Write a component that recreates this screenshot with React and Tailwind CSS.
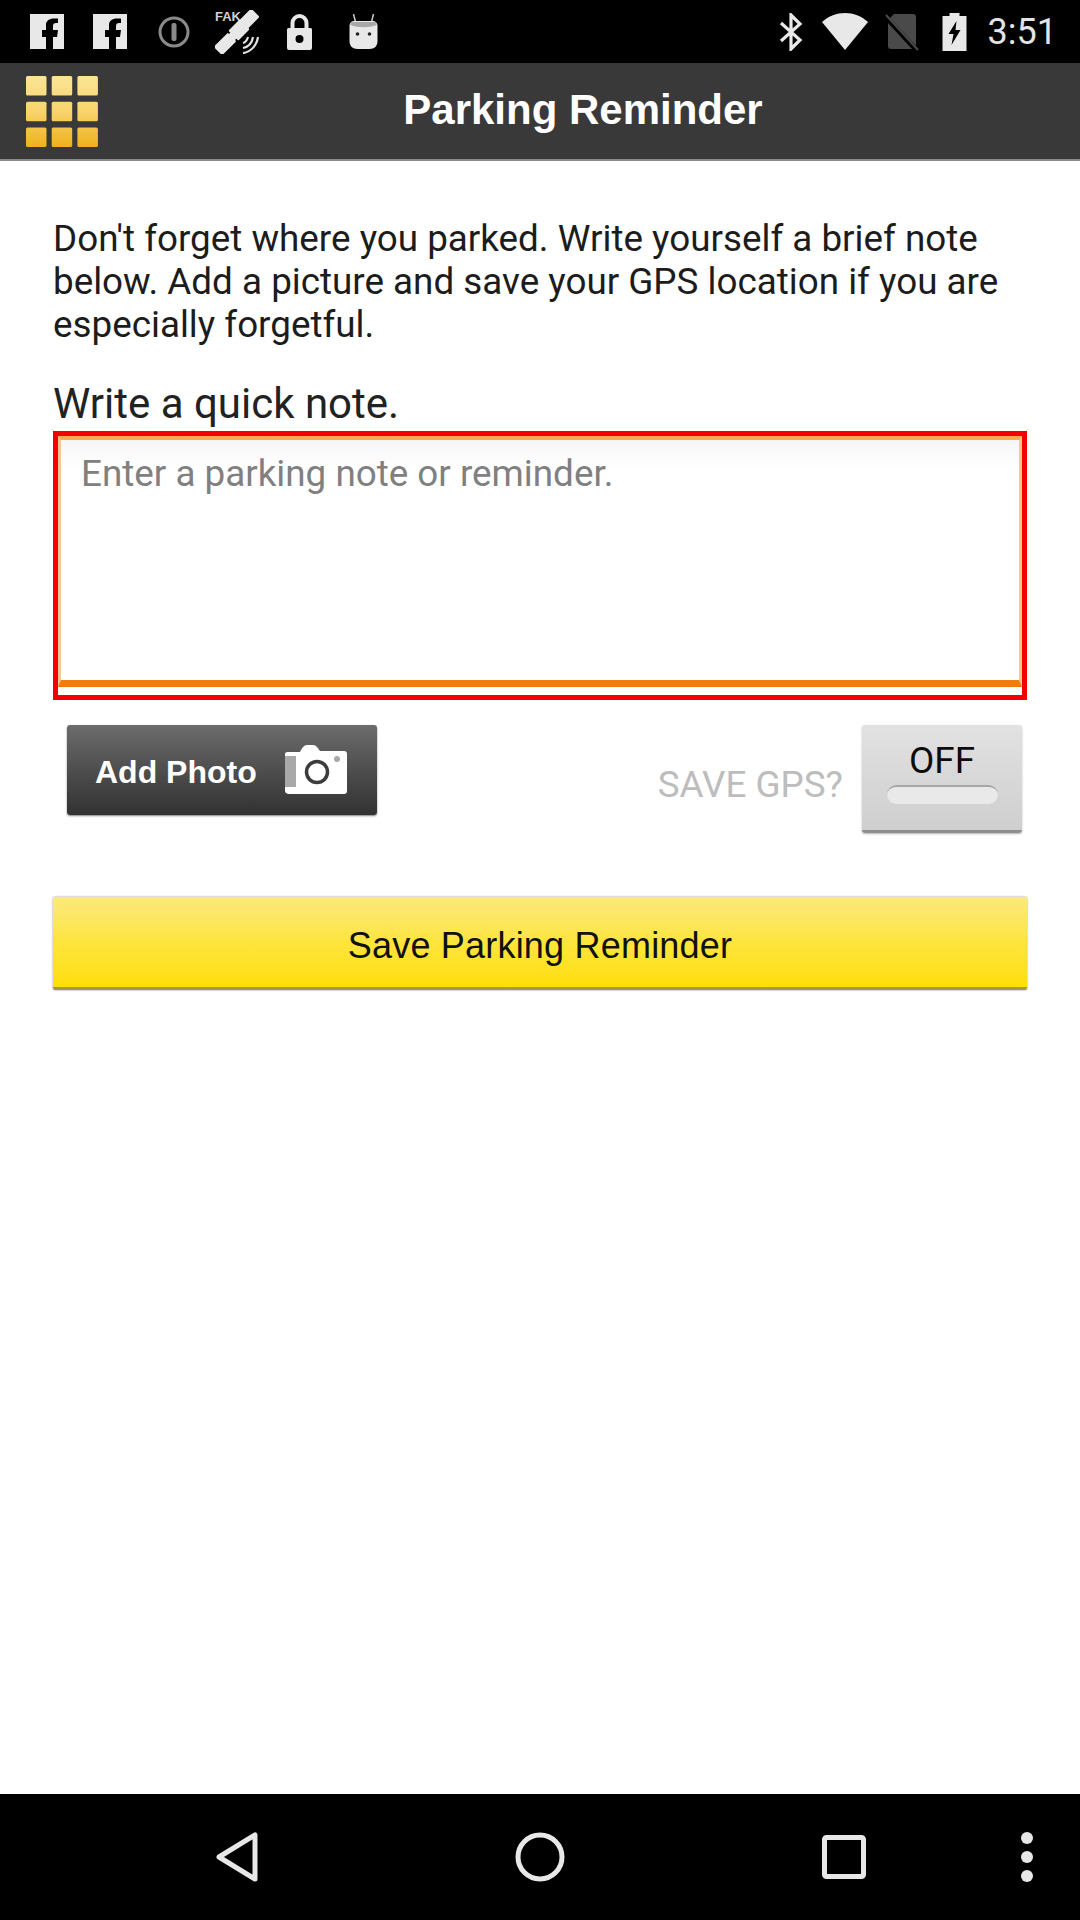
const roboto = "font-['Roboto',sans-serif]"
const arial = "font-['Liberation_Sans',Arial,sans-serif]"

function FbIcon() {
  return (
    <svg width="34" height="35" viewBox="0 0 34 35">
      <path fill="#e8e8e8" d="M0 0H34V35H23V23H27L28 16H23V12C23 10 24 9 26 9H28V4.500C26 4.500 25 4.500 24 4.500C19 4.500 16 7 16 11V16H12V23H16V35H0Z" />
    </svg>
  )
}

function StatusBar() {
  return (
    <div className="flex h-[63px] items-center bg-black pl-[30px] pr-[23px]">
      <FbIcon />
      <div className="ml-[29px]"><FbIcon /></div>
      <svg className="ml-[31px]" width="32" height="32" viewBox="0 0 32 32">
        <circle cx="16" cy="16" r="14" fill="none" stroke="#8a8a8a" strokeWidth="3" />
        <rect x="13.500" y="7" width="5" height="18" rx="2" fill="#8a8a8a" />
      </svg>
      <svg className="ml-[25px]" width="44" height="44" viewBox="0 0 44 44">
        <text x="0" y="11" fontSize="13" fontWeight="700" fill="#d0d0d0" fontFamily="Liberation Sans, sans-serif">FAK</text>
        <g fill="#e8e8e8">
          <rect x="-6" y="-9" width="12" height="18" transform="translate(34 9) rotate(45)" rx="1" />
          <rect x="-7" y="-8" width="14" height="16" transform="translate(24 20) rotate(45)" rx="1" />
          <rect x="-6" y="-10" width="12" height="20" transform="translate(10 34) rotate(45)" rx="1" />
          <path d="M15 23L21 29" stroke="#e8e8e8" strokeWidth="4" />
        </g>
        <path fill="none" stroke="#e0e0e0" strokeWidth="2.200" d="M28 43C36 42 42 35 43 27M28 38C33 37 37 33 38 27M28 33C30 32.500 32 30.500 33 27" />
      </svg>
      <svg className="ml-[27px]" width="27" height="36" viewBox="0 0 26 36">
        <path fill="none" stroke="#e8e8e8" strokeWidth="4" d="M6 16V9a7 7 0 0 1 14 0v7" />
        <path fill="#e8e8e8" fillRule="evenodd" d="M2 14H24a1.500 1.500 0 0 1 1.500 1.500V34a2 2 0 0 1-2 2H2.500a2 2 0 0 1-2-2V15.500A1.500 1.500 0 0 1 2 14ZM13 21a4 4 0 1 0 0 8 4 4 0 0 0 0-8Z" />
      </svg>
      <svg className="ml-[35px]" width="31" height="36" viewBox="0 0 30 36">
        <path stroke="#c8c8c8" strokeWidth="1.500" d="M7 8L5 0M23 8L25 0" />
        <path fill="#e8e8e8" d="M6 7H24C27 7 29 9 29 12V27C29 32 26 35 21 35H9C4 35 1 32 1 27V12C1 9 3 7 6 7Z" />
        <path fill="#a8a8a8" d="M4 8H26C27 8 28 9 28 11C20 14 10 14 2 11C2 9 3 8 4 8Z" />
        <circle cx="9" cy="20" r="1.800" fill="#222" />
        <circle cx="21" cy="20" r="1.800" fill="#222" />
      </svg>
      <div className="flex-1" />
      <svg width="24" height="38" viewBox="0 0 24 38">
        <path fill="none" stroke="#e8e8e8" strokeWidth="3.200" d="M2 10L21 27L12 36V2L21 11L2 28" />
      </svg>
      <svg className="ml-[19px]" width="46" height="37" viewBox="0 0 46 37">
        <path fill="#e8e8e8" d="M23 37L0 9C13-3 33-3 46 9Z" />
      </svg>
      <svg className="ml-[17px]" width="34" height="38" viewBox="0 0 34 38">
        <path fill="#4a4a4a" d="M9 1H28a3 3 0 0 1 3 3V33L5 5Z M3 10L27 36H6a3 3 0 0 1-3-3Z" />
        <path stroke="#4a4a4a" strokeWidth="2" d="M1 2L33 37" />
      </svg>
      <svg className="ml-[23px]" width="25" height="38" viewBox="0 0 24 38">
        <path fill="#e8e8e8" fillRule="evenodd" d="M7 0H17V3H24V38H0V3H7ZM14 8L6 21H11L9 32L18 17H13Z" />
      </svg>
      <span className={`ml-[21px] text-[36px] leading-none text-[#e4e4e4] ${roboto}`}>3:51</span>
    </div>
  )
}

function GridIcon() {
  const spots = [0, 25.700, 51.400]
  return (
    <svg width="72" height="71" viewBox="0 0 72 71">
      <defs>
        <linearGradient id="tiles" x1="0" x2="0" y1="0" y2="1">
          <stop offset="0%" stopColor="#fbe596" />
          <stop offset="50%" stopColor="#f8d46c" />
          <stop offset="100%" stopColor="#efb11c" />
        </linearGradient>
        <mask id="tilemask">
          {spots.map((y) => spots.map((x) => (
            <rect key={`${x}-${y}`} x={x} y={y} width="20.500" height="19.600" rx="1.500" fill="#fff" />
          )))}
        </mask>
      </defs>
      <rect width="72" height="71" fill="url(#tiles)" mask="url(#tilemask)" />
    </svg>
  )
}

function Camera() {
  return (
    <svg width="64" height="52" viewBox="0 0 64 52">
      <path fill="#fff" d="M3 8H16C18 4 20 1 23 1H29C32 1 34 4 36 7H60C62 7 63 8 63 10V47C63 49 62 50 60 50H5C3 50 1 49 1 47V10C1 9 2 8 3 8Z" />
      <rect x="1" y="12" width="11" height="31" fill="#a9a9a9" />
      <circle cx="33" cy="28" r="10.500" fill="none" stroke="#3c3c3c" strokeWidth="3.500" />
      <circle cx="53" cy="15" r="3" fill="#a9a9a9" />
    </svg>
  )
}

export default function App() {
  return (
    <div className="flex h-[1920px] w-[1080px] flex-col overflow-hidden bg-white">
      <StatusBar />

      <header className="flex h-[98px] items-center border-b-2 border-[#8c8c8c] bg-[#393939]">
        <div className="w-[86px] shrink-0 pl-[26px] pt-[1px]"><GridIcon /></div>
        <h1 className={`flex-1 pb-[4px] text-center text-[42px] font-bold text-white ${arial}`}>Parking Reminder</h1>
      </header>

      <main className={`flex-1 px-[53px] pt-[56px] ${roboto}`}>
        <p className="text-[36.800px] leading-[43px] text-[#1c1c1c]">
          Don't forget where you parked. Write yourself a brief note below. Add a picture and save your GPS location if you are especially forgetful.
        </p>
        <p className="mt-[36px] text-[42px] leading-[44px] text-[#222]">Write a quick note.</p>

        <div className="mt-[5px] h-[269px] border-[5px] border-[#f40000] pb-[8px]">
          <div className="h-full border-x-[3px] border-t-[4px] border-b-[7px] border-x-[#f9c78d] border-t-[#f9a94e] border-b-[#f57c0c] bg-gradient-to-b from-[#f6f6f6] to-white to-[12%] pl-[20px] pt-[12px]">
            <p className="text-[36.800px] leading-[44px] text-[#808080]">Enter a parking note or reminder.</p>
          </div>
        </div>

        <div className="mt-[25px] flex items-start">
          <button className={`ml-[14px] flex h-[90px] w-[310px] items-center rounded-[3px] bg-gradient-to-b from-[#6c6c6c] to-[#323232] pl-[28px] text-[32px] font-bold text-white shadow-[0_1px_2px_rgba(0,0,0,0.5)] ${arial}`}>
            <span className="pt-[4px]">Add Photo</span>
            <span className="ml-[27px]"><Camera /></span>
          </button>
          <span className="ml-auto mt-[39px] text-[36.800px] leading-[42px] text-[#bdbdbd]">SAVE GPS?</span>
          <button className="ml-[19px] mr-[5px] flex h-[108px] w-[160px] flex-col items-center rounded-[3px] border-b-[3px] border-[#8f8f8f] bg-gradient-to-b from-[#e2e2e2] via-[#d8d8d8] to-[#cfcfcf] pt-[16px] shadow-[0_1px_2px_rgba(0,0,0,0.3)]">
            <span className="text-[36.800px] leading-[40px] text-[#0c0c0c]">OFF</span>
            <span className="mt-[4px] h-[19px] w-[111px] rounded-full border-t-2 border-[#a6a6a6] bg-[#e9e9e9]" />
          </button>
        </div>

        <button className={`mt-[64px] flex h-[93px] w-full items-center justify-center rounded-[2px] border-b-[3px] border-[#a89a3a] bg-gradient-to-b from-[#fbe97c] via-[#fde53a] to-[#ffde00] pt-[8px] text-[36px] tracking-[0.2px] text-[#111] shadow-[0_0_2px_rgba(0,0,0,0.5)] ${arial}`}>
          Save Parking Reminder
        </button>
      </main>

      <nav className="flex h-[126px] items-center bg-black">
        <svg className="ml-[215px]" width="44" height="50" viewBox="0 0 44 50">
          <path fill="none" stroke="#e8e8e8" strokeWidth="5" strokeLinejoin="round" d="M40 3V47L4 25Z" />
        </svg>
        <svg className="ml-[256px]" width="50" height="50" viewBox="0 0 50 50">
          <circle cx="25" cy="25" r="22" fill="none" stroke="#e8e8e8" strokeWidth="5" />
        </svg>
        <svg className="ml-[257px]" width="44" height="44" viewBox="0 0 44 44">
          <rect x="2.500" y="2.500" width="39" height="39" rx="2" fill="none" stroke="#e8e8e8" strokeWidth="5" />
        </svg>
        <svg className="ml-[154px]" width="14" height="50" viewBox="0 0 14 50">
          <circle cx="7" cy="6" r="6" fill="#e8e8e8" />
          <circle cx="7" cy="25" r="6" fill="#e8e8e8" />
          <circle cx="7" cy="44" r="6" fill="#e8e8e8" />
        </svg>
      </nav>
    </div>
  )
}
